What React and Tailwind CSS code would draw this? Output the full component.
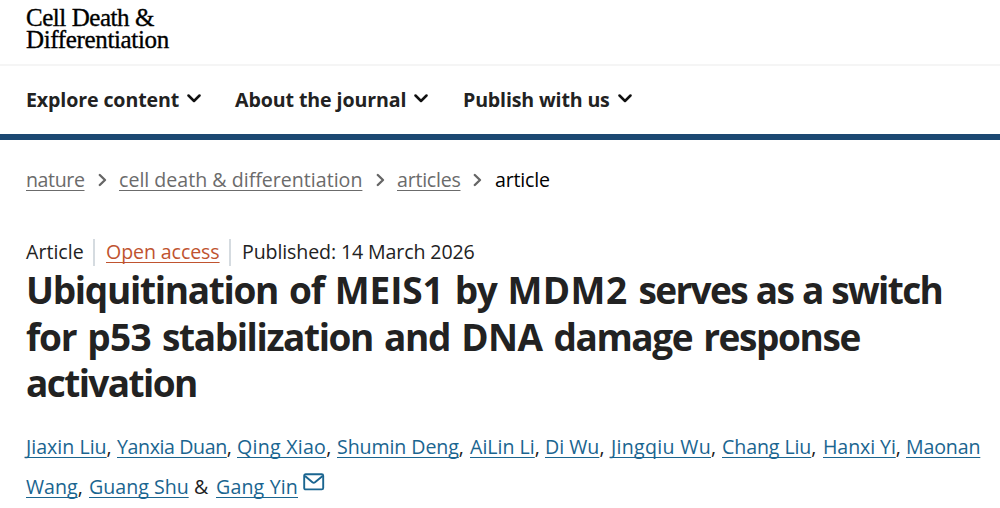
const navItems = [
  { label: 'Explore content', width: 'w-[209px]', spacing: 'tracking-[-0.12px]' },
  { label: 'About the journal', width: 'w-[228px]', spacing: 'tracking-[-0.1px]' },
  { label: 'Publish with us', width: 'w-[180px]', spacing: 'tracking-[-0.16px]' },
]

const firstAuthors = [
  { name: 'Jiaxin Liu', style: 'w-[91px]' },
  { name: 'Yanxia Duan', style: 'w-[120px] tracking-[-0.4px]' },
  { name: 'Qing Xiao', style: 'w-[100px] tracking-[0.25px]' },
  { name: 'Shumin Deng', style: 'w-[133px] tracking-[-0.1px]' },
  { name: 'AiLin Li', style: 'w-[75px]' },
  { name: 'Di Wu', style: 'w-[66px]' },
  { name: 'Jingqiu Wu', style: 'w-[111px] tracking-[0.3px]' },
  { name: 'Chang Liu', style: 'w-[101px] tracking-[-0.1px]' },
  { name: 'Hanxi Yi', style: 'w-[83px] tracking-[-0.1px]' },
]

function ChevronDown() {
  return (
    <svg className="w-[14px] h-[9px] -mt-px" viewBox="0 0 14 9" fill="none" stroke="#111" strokeWidth="2.5">
      <path d="M1.5 1.5 7 7 12.5 1.5" strokeLinecap="round" strokeLinejoin="round" />
    </svg>
  )
}

function ChevronRight() {
  return (
    <svg className="w-[9px] h-[14px] shrink-0" viewBox="0 0 9 14" fill="none" stroke="#666" strokeWidth="2.4">
      <path d="M1.8 2 7 7 1.8 12" strokeLinecap="round" strokeLinejoin="round" />
    </svg>
  )
}

function TextLink({ className, children }) {
  return (
    <a href="#" className={`underline decoration-1 underline-offset-[3px] [text-decoration-skip-ink:none] ${className}`}>
      {children}
    </a>
  )
}

function Author({ name }) {
  return <TextLink className="text-[#1a6590]">{name}</TextLink>
}

function App() {
  return (
    <div className="w-[1000px] h-[508px] overflow-hidden bg-white text-[#222] font-['Open_Sans','Noto_Sans',sans-serif] text-[19.6px] whitespace-nowrap">
      <header>
        <div className="h-[66px] pl-[26px] pt-[7px] border-b-2 border-[#f5f5f5] font-['Liberation_Serif',serif] text-[25px] leading-[22px] text-black [-webkit-text-stroke:0.35px_black]">
          <div className="tracking-[-0.45px]">Cell Death &amp;</div>
          <div className="tracking-[-0.35px]">Differentiation</div>
        </div>
        <nav className="h-[74px] pl-[26px] pb-[1px] flex items-center border-b-6 border-[#1c4872] font-bold">
          {navItems.map((item) => (
            <div key={item.label} className={`${item.width} flex items-center gap-2`}>
              <span className={item.spacing}>{item.label}</span>
              <ChevronDown />
            </div>
          ))}
        </nav>
      </header>

      <main className="px-[26px]">
        <div className="h-[80px] flex items-center text-[#6b6b6b]">
          <span className="w-[72px]"><TextLink className="tracking-[-0.4px]">nature</TextLink></span>
          <ChevronRight />
          <span className="ml-3 w-[257px]"><TextLink>cell death &amp; differentiation</TextLink></span>
          <ChevronRight />
          <span className="ml-3 w-[76px]"><TextLink className="tracking-[-0.25px]">articles</TextLink></span>
          <ChevronRight />
          <span className="ml-[13px] text-black tracking-[-0.2px]">article</span>
        </div>

        <div className="mt-[18px] h-[28px] flex items-center leading-[25px]">
          <span className="w-[69px] h-[27px] border-r-2 border-[#d5dbe0]">Article</span>
          <span className="w-[136px] h-[27px] pl-[11px] border-r-2 border-[#d5dbe0]">
            <TextLink className="text-[#c0532f] tracking-[-0.1px]">Open access</TextLink>
          </span>
          <span className="h-[27px] pl-[11px] tracking-[-0.12px]">Published: 14 March 2026</span>
        </div>

        <h1 className="mt-px font-bold text-[37px] leading-[46.5px] tracking-[-1.3px] [word-spacing:2.7px]">
          <div>
            Ubiquitination of <span className="tracking-[-0.1px]">MEIS1</span> by{' '}
            <span className="tracking-[0.4px]">MDM2</span>{' '}
            <span className="tracking-[-1.65px] [word-spacing:0.8px]">serves as a switch</span>
          </div>
          <div>
            for <span className="tracking-[-0.6px]">p53</span>{' '}
            <span className="tracking-[-1.4px]">stabilization</span> and{' '}
            <span className="tracking-[-0.6px]">DNA</span>{' '}
            <span className="tracking-[-1.4px]">damage response</span>
          </div>
          <div className="tracking-[-1.6px]">activation</div>
        </h1>

        <div className="mt-5 leading-[40px]">
          <div className="flex">
            {firstAuthors.map((author) => (
              <span key={author.name} className={`${author.style} shrink-0`}>
                <Author name={author.name} />,
              </span>
            ))}
            <span className="tracking-[-0.15px]"><Author name="Maonan" /></span>
          </div>
          <div className="flex">
            <span className="w-[63px]"><Author name="Wang" />,</span>
            <span className="w-[105px]"><Author name="Guang Shu" /></span>
            <span className="w-[22px]">&amp;</span>
            <span className="w-[87px] tracking-[0.15px]"><Author name="Gang Yin" /></span>
            <svg className="mt-[6px] w-[22px] h-[18px]" viewBox="0 0 22 18" fill="none" stroke="#1a6590" strokeWidth="1.9">
              <rect x="1.2" y="1.2" width="19" height="15.2" rx="1.5" />
              <path d="M2 3 9.4 9.3q1.3 1 2.6 0L19.6 3" />
            </svg>
          </div>
        </div>
      </main>
    </div>
  )
}

export default App
